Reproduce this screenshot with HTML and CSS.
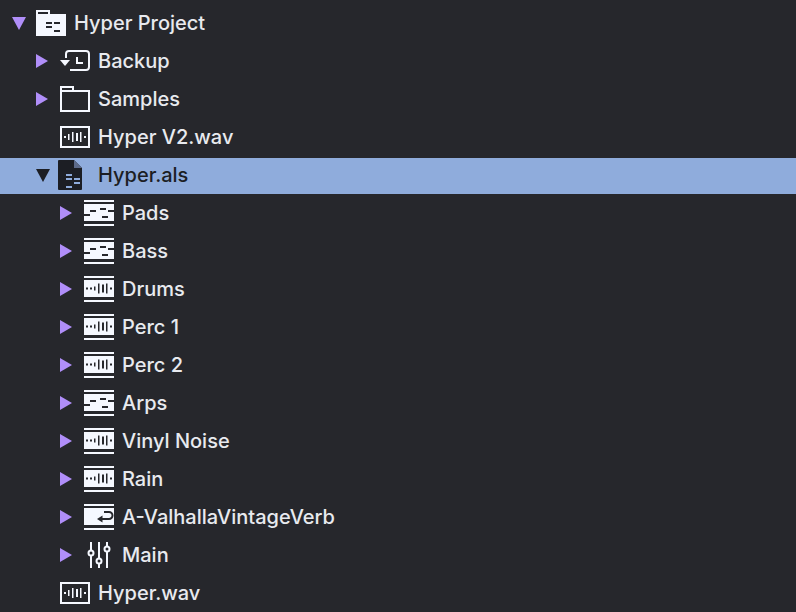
FILE: index.html
```html
<!DOCTYPE html>
<html lang="en">
<head>
  <meta charset="UTF-8" />
  <title>Hyper Project</title>
  <link rel="stylesheet" href="styles.css">
</head>
<body>
  <svg class="defs" width="0" height="0">
    <defs>
      <polygon id="tri-right" points="0,0 12,7 0,14" />
      <polygon id="tri-down" points="0,1 14,1 7,14" />

      <g id="ic-project">
        <rect class="solid" x="0" y="0" width="14" height="6" />
        <rect class="solid" x="0" y="4" width="30" height="22" />
        <rect class="cut" x="2" y="2" width="10" height="2" />
        <rect class="cut" x="10" y="12" width="6" height="2" />
        <rect class="cut" x="18" y="12" width="6" height="2" />
        <rect class="cut" x="10" y="16" width="6" height="2" />
        <rect class="cut" x="18" y="20" width="6" height="2" />
      </g>

      <g id="ic-backup">
        <path class="line" d="M6 10V6a3 3 0 0 1 3-3H26a3 3 0 0 1 3 3V19a3 3 0 0 1-3 3H10" />
        <path class="line" d="M17 9V15H23" />
        <polygon class="solid" points="0,12 10,12 5,18" />
      </g>

      <g id="ic-folder">
        <path class="line" d="M1 5H29V25H1ZM1 5V1H13V5" />
      </g>

      <g id="ic-wavebox">
        <rect class="line" x="1" y="3" width="28" height="20" />
        <g class="solid">
          <rect x="4" y="12" width="2" height="2" />
          <rect x="8" y="10" width="1.5" height="6" />
          <rect x="12" y="8" width="1.5" height="10" />
          <rect x="16" y="9" width="2" height="8" />
          <rect x="20" y="8" width="1.5" height="10" />
          <rect x="24" y="12" width="2" height="2" />
        </g>
      </g>

      <g id="ic-doc">
        <path class="doc" d="M-2 -1a1 1 0 0 1 1-1H14L22 6V27a1 1 0 0 1-1 1H-1a1 1 0 0 1-1-1Z" />
        <polygon class="fold" points="14,-2 22,6 14,6" />
        <g class="dash">
          <rect x="6" y="12" width="6" height="2" />
          <rect x="6" y="16" width="6" height="2" />
          <rect x="14" y="16" width="6" height="2" />
          <rect x="14" y="20" width="6" height="2" />
          <rect x="6" y="24" width="6" height="2" />
        </g>
      </g>

      <g id="ic-block">
        <rect class="solid" x="0" y="0" width="30" height="2" />
        <rect class="solid" x="0" y="4" width="30" height="17" />
        <rect class="solid" x="0" y="24" width="30" height="2" />
      </g>

      <g id="ic-midi">
        <use href="#ic-block" />
        <rect class="cut" x="0" y="14" width="6" height="2" />
        <rect class="cut" x="6" y="10" width="6" height="2" />
        <rect class="cut" x="16" y="8" width="6" height="2" />
        <rect class="cut" x="24" y="10" width="6" height="2" />
        <rect class="cut" x="18" y="16" width="6" height="2" />
      </g>

      <g id="ic-audio">
        <use href="#ic-block" />
        <rect class="cut" x="2" y="11.5" width="2" height="2" />
        <rect class="cut" x="6" y="11.5" width="2" height="2" />
        <rect class="cut" x="10" y="10.5" width="1.5" height="4" />
        <rect class="cut" x="14" y="7.5" width="1.5" height="10" />
        <rect class="cut" x="18" y="8.5" width="2" height="8" />
        <rect class="cut" x="22" y="7.5" width="1.5" height="10" />
        <rect class="cut" x="26" y="11.5" width="2" height="2" />
      </g>

      <g id="ic-return">
        <use href="#ic-block" />
        <path class="cut-line" d="M18 15H25a3.5 3.5 0 0 0 0-7H20" />
        <polygon class="cut" points="13,15 18.5,11.5 18.5,18.5" />
      </g>

      <g id="ic-mixer">
        <path class="line" d="M7 0V26M15 0V26M23 0V26" />
        <circle class="knob" cx="7" cy="11" r="2.5" />
        <circle class="knob" cx="15" cy="19" r="2.5" />
        <circle class="knob" cx="23" cy="7" r="2.5" />
      </g>
    </defs>
  </svg>

  <ul class="tree">
    <li class="row level-0">
      <span class="toggle"><svg class="tri" width="14" height="14"><use href="#tri-down" /></svg></span>
      <svg class="icon" width="30" height="26"><use href="#ic-project" /></svg>
      <span class="name">Hyper Project</span>
    </li>
    <li class="row level-1">
      <span class="toggle"><svg class="tri" width="14" height="14"><use href="#tri-right" /></svg></span>
      <svg class="icon" width="30" height="26"><use href="#ic-backup" /></svg>
      <span class="name">Backup</span>
    </li>
    <li class="row level-1">
      <span class="toggle"><svg class="tri" width="14" height="14"><use href="#tri-right" /></svg></span>
      <svg class="icon" width="30" height="26"><use href="#ic-folder" /></svg>
      <span class="name">Samples</span>
    </li>
    <li class="row level-1">
      <span class="toggle"></span>
      <svg class="icon" width="30" height="26"><use href="#ic-wavebox" /></svg>
      <span class="name">Hyper V2.wav</span>
    </li>
    <li class="row level-1 selected">
      <span class="toggle"><svg class="tri" width="14" height="14"><use href="#tri-down" /></svg></span>
      <svg class="icon" width="30" height="26"><use href="#ic-doc" /></svg>
      <span class="name">Hyper.als</span>
    </li>
    <li class="row level-2">
      <span class="toggle"><svg class="tri" width="14" height="14"><use href="#tri-right" /></svg></span>
      <svg class="icon" width="30" height="26"><use href="#ic-midi" /></svg>
      <span class="name">Pads</span>
    </li>
    <li class="row level-2">
      <span class="toggle"><svg class="tri" width="14" height="14"><use href="#tri-right" /></svg></span>
      <svg class="icon" width="30" height="26"><use href="#ic-midi" /></svg>
      <span class="name">Bass</span>
    </li>
    <li class="row level-2">
      <span class="toggle"><svg class="tri" width="14" height="14"><use href="#tri-right" /></svg></span>
      <svg class="icon" width="30" height="26"><use href="#ic-audio" /></svg>
      <span class="name">Drums</span>
    </li>
    <li class="row level-2">
      <span class="toggle"><svg class="tri" width="14" height="14"><use href="#tri-right" /></svg></span>
      <svg class="icon" width="30" height="26"><use href="#ic-audio" /></svg>
      <span class="name">Perc 1</span>
    </li>
    <li class="row level-2">
      <span class="toggle"><svg class="tri" width="14" height="14"><use href="#tri-right" /></svg></span>
      <svg class="icon" width="30" height="26"><use href="#ic-audio" /></svg>
      <span class="name">Perc 2</span>
    </li>
    <li class="row level-2">
      <span class="toggle"><svg class="tri" width="14" height="14"><use href="#tri-right" /></svg></span>
      <svg class="icon" width="30" height="26"><use href="#ic-midi" /></svg>
      <span class="name">Arps</span>
    </li>
    <li class="row level-2">
      <span class="toggle"><svg class="tri" width="14" height="14"><use href="#tri-right" /></svg></span>
      <svg class="icon" width="30" height="26"><use href="#ic-audio" /></svg>
      <span class="name">Vinyl Noise</span>
    </li>
    <li class="row level-2">
      <span class="toggle"><svg class="tri" width="14" height="14"><use href="#tri-right" /></svg></span>
      <svg class="icon" width="30" height="26"><use href="#ic-audio" /></svg>
      <span class="name">Rain</span>
    </li>
    <li class="row level-2">
      <span class="toggle"><svg class="tri" width="14" height="14"><use href="#tri-right" /></svg></span>
      <svg class="icon" width="30" height="26"><use href="#ic-return" /></svg>
      <span class="name">A-ValhallaVintageVerb</span>
    </li>
    <li class="row level-2">
      <span class="toggle"><svg class="tri" width="14" height="14"><use href="#tri-right" /></svg></span>
      <svg class="icon" width="30" height="26"><use href="#ic-mixer" /></svg>
      <span class="name">Main</span>
    </li>
    <li class="row level-1">
      <span class="toggle"></span>
      <svg class="icon" width="30" height="26"><use href="#ic-wavebox" /></svg>
      <span class="name">Hyper.wav</span>
    </li>
  </ul>
</body>
</html>
```

FILE: styles.css
```css
html, body {
  margin: 0;
  height: 100%;
  overflow: hidden;
  background-color: #26272c;
}

.defs {
  position: absolute;
}

.tree {
  list-style: none;
  margin: 0;
  padding: 4px 0 0;
  font-family: Inter, "Noto Sans", sans-serif;
  font-size: 20px;
  font-weight: 500;
  color: #e8eaef;
}

/* the selection band is 2px short at the top, so the top border stays see-through */
.row {
  display: flex;
  align-items: center;
  box-sizing: border-box;
  height: 38px;
  border-top: 2px solid transparent;
  padding-bottom: 2px;
  background-clip: padding-box;
}

.level-0 { padding-left: 12px; }
.level-1 { padding-left: 36px; }
.level-2 { padding-left: 60px; }

.toggle {
  display: flex;
  align-items: center;
  flex: none;
  width: 24px;
}

.tri {
  display: block;
  fill: #b08ef9;
}

.icon {
  display: block;
  flex: none;
  overflow: visible;
  margin-right: 8px;
}

.name {
  white-space: nowrap;
}

.solid { fill: #f5f8ff; }
.cut { fill: #26272c; }
.line { fill: none; stroke: #f5f8ff; stroke-width: 2; }
.cut-line { fill: none; stroke: #26272c; stroke-width: 2; }
.knob { fill: #26272c; stroke: #f5f8ff; stroke-width: 2; }

.doc { fill: #1c1e24; }
.fold { fill: #5d6b8a; }
.dash { fill: #8facdc; }

.selected {
  background-color: #8facdc;
  color: #1c1e24;
}

.selected .tri {
  fill: #1c1e24;
}
```
